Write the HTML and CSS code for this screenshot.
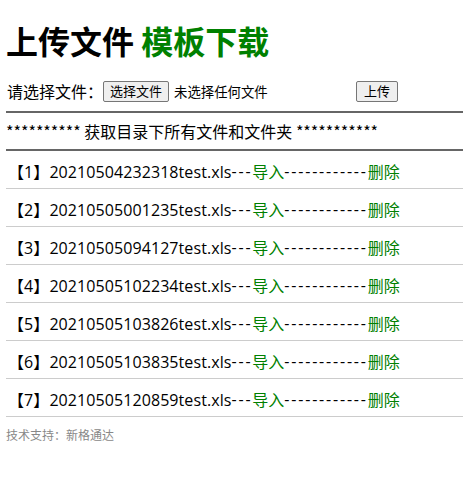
FILE: index.html
```html
<!DOCTYPE html>
<html lang="zh-CN">
<head>
<meta charset="utf-8">
<title>上传文件</title>
<link rel="stylesheet" href="styles.css">
</head>
<body>
<div class="page">
  <h1 class="title">上传文件 <a class="title-link" href="#">模板下载</a></h1>

  <form class="upload">
    <span class="upload-label">请选择文件：</span>
    <span class="file-picker">
      <button type="button" class="btn">选择文件</button>
      <span class="file-name">未选择任何文件</span>
    </span>
    <button type="button" class="btn btn-submit">上传</button>
  </form>

  <hr class="rule">
  <div class="section-title">********** 获取目录下所有文件和文件夹 ***********</div>
  <hr class="rule">

  <ul class="file-list">
    <li class="file-row"><span class="name">【1】20210504232318test.xls</span><span class="sep">---</span><a href="#" class="act">导入</a><span class="sep">------------</span><a href="#" class="act">删除</a></li>
    <li class="file-row"><span class="name">【2】20210505001235test.xls</span><span class="sep">---</span><a href="#" class="act">导入</a><span class="sep">------------</span><a href="#" class="act">删除</a></li>
    <li class="file-row"><span class="name">【3】20210505094127test.xls</span><span class="sep">---</span><a href="#" class="act">导入</a><span class="sep">------------</span><a href="#" class="act">删除</a></li>
    <li class="file-row"><span class="name">【4】20210505102234test.xls</span><span class="sep">---</span><a href="#" class="act">导入</a><span class="sep">------------</span><a href="#" class="act">删除</a></li>
    <li class="file-row"><span class="name">【5】20210505103826test.xls</span><span class="sep">---</span><a href="#" class="act">导入</a><span class="sep">------------</span><a href="#" class="act">删除</a></li>
    <li class="file-row"><span class="name">【6】20210505103835test.xls</span><span class="sep">---</span><a href="#" class="act">导入</a><span class="sep">------------</span><a href="#" class="act">删除</a></li>
    <li class="file-row"><span class="name">【7】20210505120859test.xls</span><span class="sep">---</span><a href="#" class="act">导入</a><span class="sep">------------</span><a href="#" class="act">删除</a></li>
  </ul>

  <p class="footer">技术支持：新格通达</p>
</div>
</body>
</html>
```

FILE: styles.css
```css
html, body {
  margin: 0;
  padding: 0;
  background: #fff;
}

body {
  font-family: "Open Sans", "Noto Sans CJK SC", sans-serif;
  color: #000;
}

.page {
  padding-left: 6px;
}

.title {
  margin: 0;
  padding-top: 20px;
  font-size: 32px;
  line-height: 40px;
  font-weight: bold;
  font-family: "Noto Sans CJK SC", sans-serif;
}

.title-link {
  color: #008000;
  text-decoration: none;
}

.upload {
  display: flex;
  align-items: center;
  margin-top: 20px;
  height: 22px;
  padding-left: 1px;
}

.upload-label {
  font-size: 16px;
  font-family: "Noto Sans CJK SC", sans-serif;
  line-height: 22px;
  margin-right: -6px;
}

.file-picker {
  display: flex;
  align-items: center;
  margin-left: 6px;
  width: 253px;
}

.btn {
  font-family: "Noto Sans CJK SC", sans-serif;
  font-size: 13px;
  line-height: 16px;
  height: 21px;
  padding: 0 6px;
  border: 1px solid #767676;
  border-radius: 2px;
  background: #efefef;
  color: #000;
}

.file-name {
  font-size: 13.4px;
  font-family: "Noto Sans CJK SC", sans-serif;
  margin-left: 5px;
}

.btn-submit {
  padding: 0 7px;
}

.rule {
  margin: 0;
  border: 0;
  height: 2px;
  background: #666;
}

.upload + .rule {
  margin-top: 9px;
}

.section-title {
  font-size: 16px;
  font-family: "Noto Sans CJK SC", sans-serif;
  line-height: 22px;
  padding: 7px 0 7px;
}

.file-list {
  list-style: none;
  margin: 0;
  padding: 0;
}

.file-row {
  display: flex;
  align-items: center;
  box-sizing: border-box;
  height: 38px;
  padding: 2px 0 0 2px;
  font-size: 16px;
  border-bottom: 1px solid #ccc;
  white-space: nowrap;
}

.name {
  letter-spacing: 0.08px;
}

.sep {
  letter-spacing: 1.8px;
}

.act {
  color: #008000;
  text-decoration: none;
  font-family: "Noto Sans CJK SC", sans-serif;
}

.footer {
  margin: 9px 0 0;
  font-size: 12px;
  line-height: 18px;
  color: #888;
  font-family: "Noto Sans CJK SC", sans-serif;
}
```
